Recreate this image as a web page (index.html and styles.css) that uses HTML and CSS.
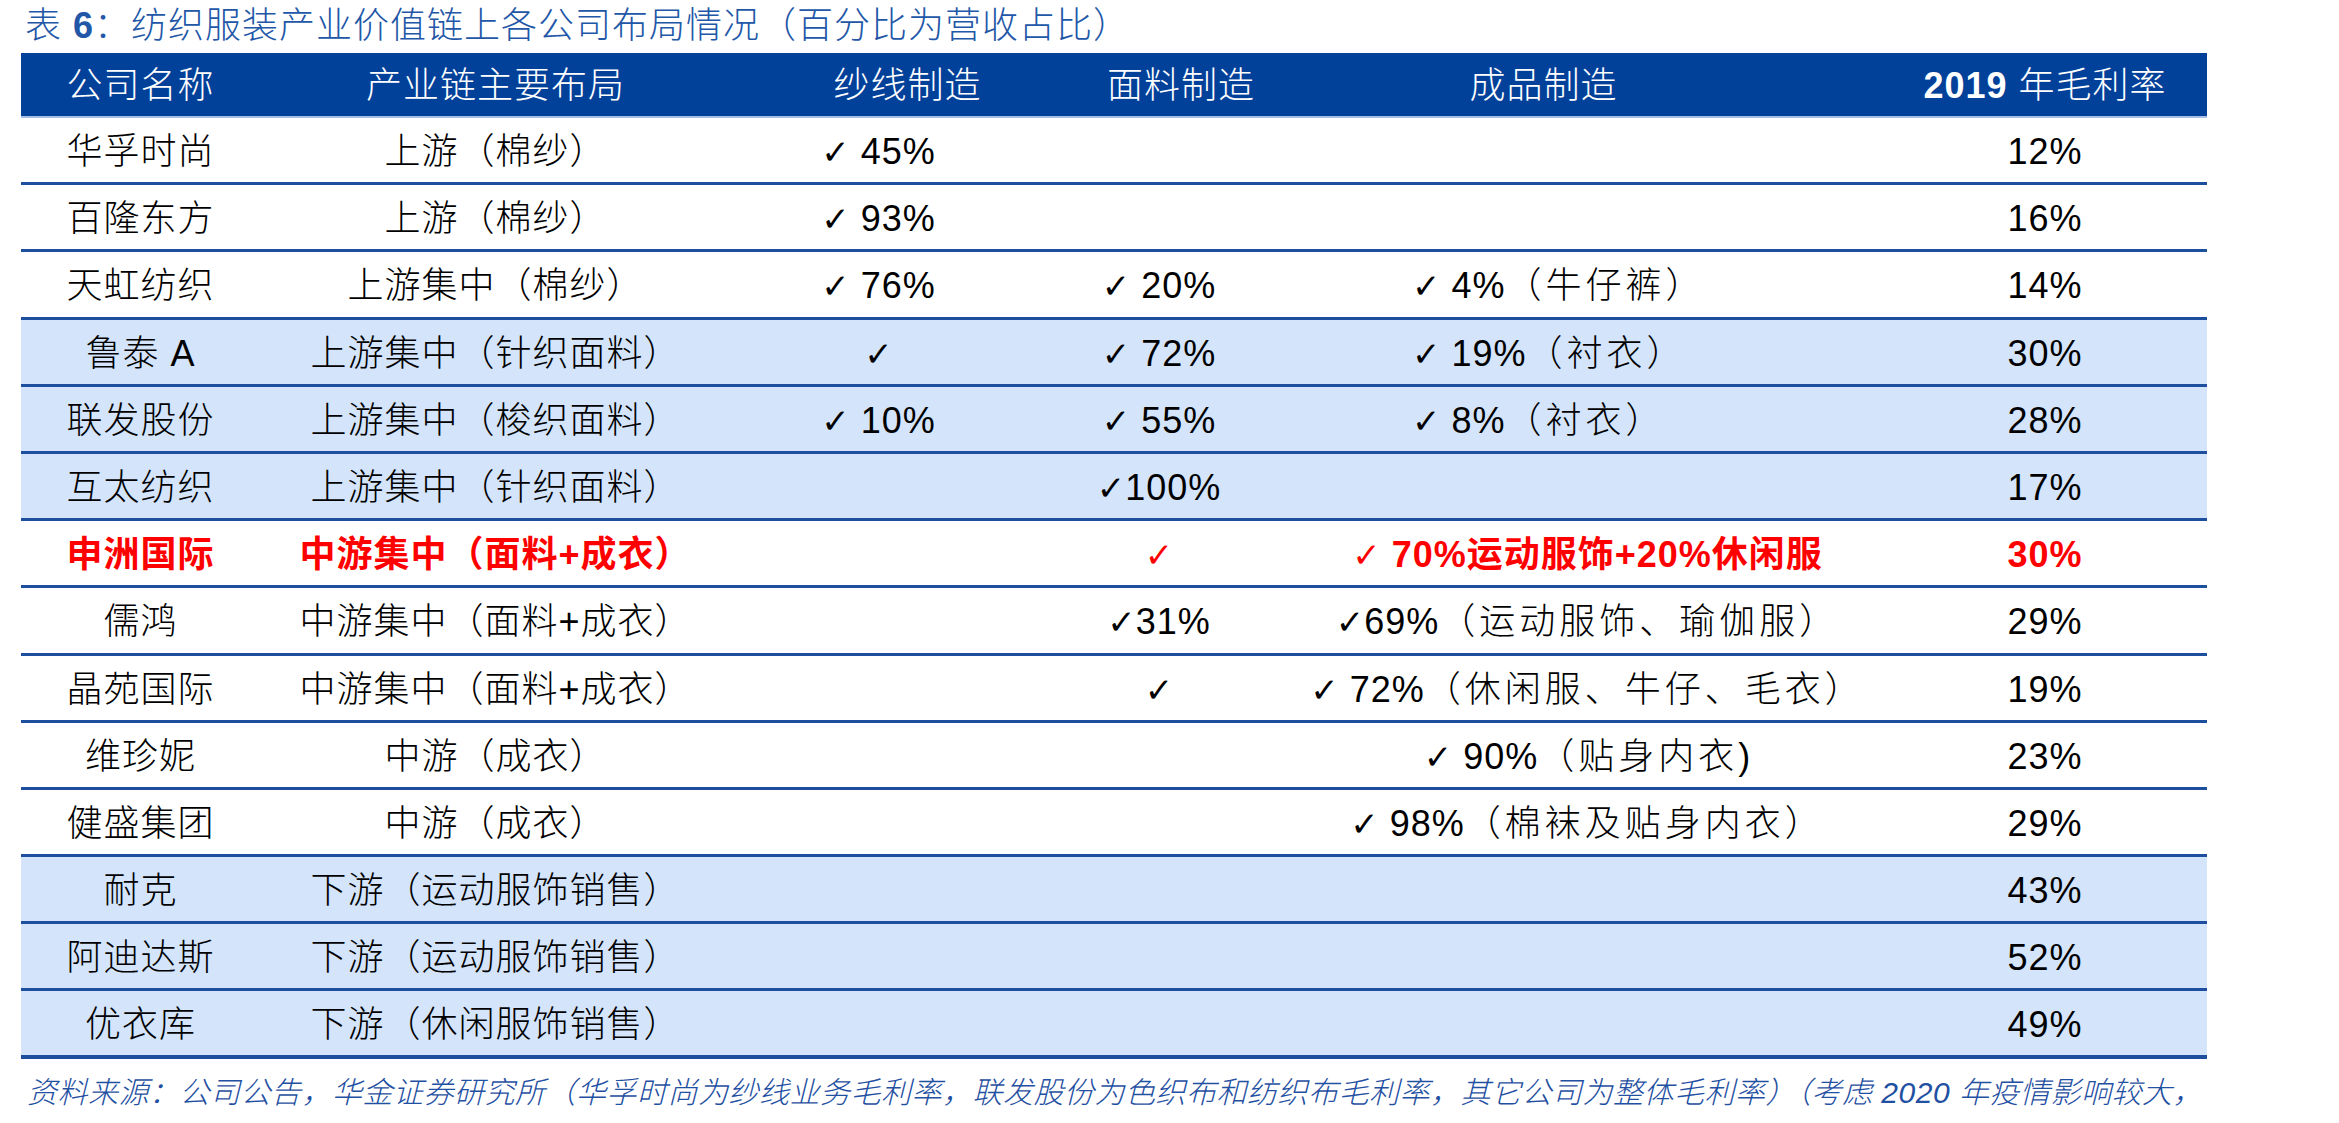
FILE: index.html
```html
<!DOCTYPE html>
<html lang="zh-CN">
<head>
<meta charset="utf-8">
<title>表6：纺织服装产业价值链上各公司布局情况</title>
<link rel="stylesheet" href="styles.css">
</head>
<body>
<div class="page">
  <div class="title">表 <b class="num">6</b>：纺织服装产业价值链上各公司布局情况（百分比为营收占比）</div>
  <div class="table">
    <div class="row head">
      <div class="cell">公司名称</div>
      <div class="cell">产业链主要布局</div>
      <div class="cell h3">纱线制造</div>
      <div class="cell h4">面料制造</div>
      <div class="cell h5">成品制造</div>
      <div class="cell"><b class="num">2019</b> 年毛利率</div>
    </div>
    <div class="row">
      <div class="cell">华孚时尚</div><div class="cell">上游（棉纱）</div>
      <div class="cell"><span class="ck">✓</span> 45%</div><div class="cell"></div><div class="cell"></div>
      <div class="cell">12%</div>
    </div>
    <div class="row">
      <div class="cell">百隆东方</div><div class="cell">上游（棉纱）</div>
      <div class="cell"><span class="ck">✓</span> 93%</div><div class="cell"></div><div class="cell"></div>
      <div class="cell">16%</div>
    </div>
    <div class="row">
      <div class="cell">天虹纺织</div><div class="cell">上游集中（棉纱）</div>
      <div class="cell"><span class="ck">✓</span> 76%</div><div class="cell"><span class="ck">✓</span> 20%</div>
      <div class="cell left"><span class="ck">✓</span> 4%<span class="wide">（牛仔裤）</span></div>
      <div class="cell">14%</div>
    </div>
    <div class="row alt">
      <div class="cell">鲁泰 A</div><div class="cell">上游集中（针织面料）</div>
      <div class="cell"><span class="ck">✓</span></div><div class="cell"><span class="ck">✓</span> 72%</div>
      <div class="cell left"><span class="ck">✓</span> 19%<span class="wide">（衬衣）</span></div>
      <div class="cell">30%</div>
    </div>
    <div class="row alt">
      <div class="cell">联发股份</div><div class="cell">上游集中（梭织面料）</div>
      <div class="cell"><span class="ck">✓</span> 10%</div><div class="cell"><span class="ck">✓</span> 55%</div>
      <div class="cell left"><span class="ck">✓</span> 8%<span class="wide">（衬衣）</span></div>
      <div class="cell">28%</div>
    </div>
    <div class="row alt">
      <div class="cell">互太纺织</div><div class="cell">上游集中（针织面料）</div>
      <div class="cell"></div><div class="cell"><span class="ck">✓</span>100%</div><div class="cell"></div>
      <div class="cell">17%</div>
    </div>
    <div class="row hl">
      <div class="cell">申洲国际</div><div class="cell">中游集中（面料+成衣）</div>
      <div class="cell"></div><div class="cell"><span class="ck">✓</span></div>
      <div class="cell"><span class="ck">✓</span> 70%运动服饰+20%休闲服</div>
      <div class="cell">30%</div>
    </div>
    <div class="row">
      <div class="cell">儒鸿</div><div class="cell">中游集中（面料+成衣）</div>
      <div class="cell"></div><div class="cell"><span class="ck">✓</span>31%</div>
      <div class="cell"><span class="ck">✓</span>69%<span class="wide">（运动服饰、瑜伽服）</span></div>
      <div class="cell">29%</div>
    </div>
    <div class="row">
      <div class="cell">晶苑国际</div><div class="cell">中游集中（面料+成衣）</div>
      <div class="cell"></div><div class="cell"><span class="ck">✓</span></div>
      <div class="cell"><span class="ck">✓</span> 72%<span class="wide">（休闲服、牛仔、毛衣）</span></div>
      <div class="cell">19%</div>
    </div>
    <div class="row">
      <div class="cell">维珍妮</div><div class="cell">中游（成衣）</div>
      <div class="cell"></div><div class="cell"></div>
      <div class="cell"><span class="ck">✓</span> 90%<span class="wide">（贴身内衣</span>)</div>
      <div class="cell">23%</div>
    </div>
    <div class="row">
      <div class="cell">健盛集团</div><div class="cell">中游（成衣）</div>
      <div class="cell"></div><div class="cell"></div>
      <div class="cell"><span class="ck">✓</span> 98%<span class="wide">（棉袜及贴身内衣）</span></div>
      <div class="cell">29%</div>
    </div>
    <div class="row alt">
      <div class="cell">耐克</div><div class="cell">下游（运动服饰销售）</div>
      <div class="cell"></div><div class="cell"></div><div class="cell"></div>
      <div class="cell">43%</div>
    </div>
    <div class="row alt">
      <div class="cell">阿迪达斯</div><div class="cell">下游（运动服饰销售）</div>
      <div class="cell"></div><div class="cell"></div><div class="cell"></div>
      <div class="cell">52%</div>
    </div>
    <div class="row alt last">
      <div class="cell">优衣库</div><div class="cell">下游（休闲服饰销售）</div>
      <div class="cell"></div><div class="cell"></div><div class="cell"></div>
      <div class="cell">49%</div>
    </div>
  </div>
  <div class="source">资料来源：公司公告，华金证券研究所（华孚时尚为纱线业务毛利率，联发股份为色织布和纺织布毛利率，其它公司为整体毛利率）（考虑 <span class="num">2020</span> 年疫情影响较大，</div>
</div>
</body>
</html>
```
FILE: styles.css
```css
html, body {
  margin: 0;
  padding: 0;
  background: #ffffff;
}

.page {
  padding-left: 21px;
  font-family: "Liberation Sans", "Noto Sans CJK SC", sans-serif;
  font-weight: 300;
  color: #000000;
}

.title {
  height: 53px;
  line-height: 52px;
  padding-left: 4px;
  font-size: 36px;
  letter-spacing: 1px;
  color: #2257a8;
  white-space: nowrap;
}

.num {
  font-family: "Liberation Sans", sans-serif;
}

.title .num {
  font-weight: bold;
}

.table {
  width: 2186px;
}

.row {
  display: grid;
  grid-template-columns: 239px 471px 295px 266px 591px 324px;
  height: 67.2px;
  box-sizing: border-box;
  border-bottom: 3px solid #1e4f9f;
  background: #ffffff;
  font-size: 36px;
  line-height: 67px;
}

.row.alt {
  background: #d3e4fb;
}

.row.last {
  border-bottom-width: 4px;
}

.row.head {
  height: 65px;
  line-height: 65px;
  background: #02419a;
  color: #ffffff;
  border-bottom: 2px solid #a8bfe5;
}

.head .num {
  font-weight: bold;
}

.cell {
  text-align: center;
  white-space: nowrap;
  letter-spacing: 1px;
}

.head .h3 {
  padding-left: 58px;
}

.head .h4 {
  padding-left: 44px;
}

.head .h5 {
  padding-right: 88px;
}

.cell.left {
  text-align: left;
  padding-left: 120px;
}

.wide {
  letter-spacing: 4px;
}

.ck {
  font-family: "DejaVu Sans", sans-serif;
  font-size: 34px;
  font-weight: normal;
  letter-spacing: 0;
}

.row.hl {
  color: #ff0000;
  font-weight: bold;
}

.row.hl .ck {
  font-weight: bold;
}

.source {
  height: 64px;
  line-height: 68px;
  font-size: 30px;
  font-style: italic;
  letter-spacing: 0.5px;
  color: #1f50a2;
  white-space: nowrap;
  padding-left: 6px;
}
```
